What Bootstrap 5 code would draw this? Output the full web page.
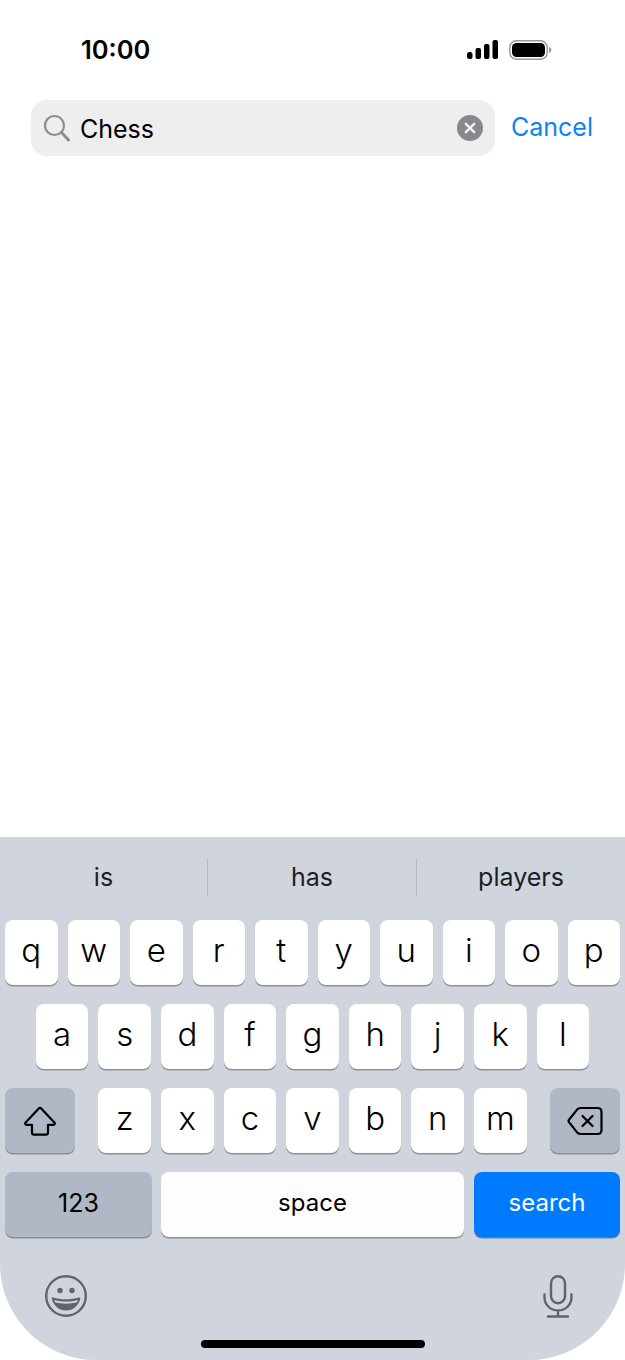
<!DOCTYPE html>
<html lang="en">
<head>
    <meta charset="UTF-8">
    <meta name="viewport" content="width=device-width, initial-scale=1.0">
    <title>Search</title>
    <link href="https://cdn.jsdelivr.net/npm/bootstrap@5.3.0/dist/css/bootstrap.min.css" rel="stylesheet">
    <style>
        html, body { height: 1360px; overflow: hidden; background: #fff; }
        body { font-family: Inter, "Liberation Sans", sans-serif; color: #000; }
        .phone { width: 625px; height: 1360px; }
        .status-bar { height: 100px; padding: 32px 73px 0 81px; align-items: flex-start; }
        .clock { font-size: 25.5px; font-weight: 600; line-height: 36px; }
        .status-icons { gap: 11px; padding-top: 7px; }
        .search-row { padding: 0 32px 0 31px; gap: 16px; }
        .search-box { width: 464px; height: 56px; background: #eeeeef; border-radius: 16px; padding: 0 12px 0 12px; flex-shrink: 0; }
        .search-text { font-size: 25px; margin-left: 10px; line-height: 1; padding-top: 2px; }
        .cancel-link { font-size: 25px; color: #0a84f5; text-decoration: none; }
        .keyboard { height: 523px; background: #d0d5dd; border-radius: 0 0 96px 96px; padding: 0 5px; }
        .suggest-row { height: 83px; margin: 0 -5px; padding-top: 21px; }
        .suggest-item { height: 38px; font-size: 25px; font-weight: 400; line-height: 38px; color: #1c1f24; text-align: center; }
        .suggest-item + .suggest-item { border-left: 1px solid #b7bcc5; }
        .first-slot { width: 207px; }
        .mid-slot { width: 209px; }
        .key-row { height: 65px; margin-bottom: 19px; gap: 10px; }
        .key-group { gap: 10px; }
        .kb-key { width: 52.6px; height: 65px; background: #fff; border-radius: 8px; box-shadow: 0 1.5px 0 #8b8f96; font-size: 33px; font-weight: 300; line-height: 60px; text-align: center; color: #000; }
        .kb-key.func { background: #b1b8c5; }
        .kb-key.wide { width: 70px; }
        .kb-key.txt { font-size: 24px; font-weight: 400; line-height: 62px; }
        .kb-key.blue { background: #007aff; color: #fff; box-shadow: 0 1.5px 0 #5d7fa8; }
        .kb-key.num-key { width: 147px; font-size: 25px; }
        .space-key { width: 303px; margin-left: -1px; background: #fdfdfd; }
        .search-key { width: 146px; }
        .bottom-icons { height: 64px; padding: 20px 47px 0 40px; margin-top: -1px; }
        .home-bar { width: 224px; height: 8px; background: #000; border-radius: 4px; margin: 21px auto 0; }
    </style>
</head>
<body>
    <div class="phone d-flex flex-column">
        <div class="status-bar d-flex justify-content-between">
            <span class="clock">10:00</span>
            <div class="status-icons d-flex align-items-start">
                <svg width="31" height="20" viewBox="0 0 31 20"><rect x="0" y="13" width="5.500" height="7" rx="2.500"/><rect x="8.500" y="9" width="5.500" height="11" rx="2"/><rect x="17" y="5" width="5.500" height="15" rx="2"/><rect x="25.500" y="1" width="5.500" height="19" rx="2"/></svg>
                <svg width="43" height="22" viewBox="0 0 43 22"><rect x="0.800" y="1.800" width="37.400" height="18.400" rx="6.500" fill="none" stroke="#9a9a9a" stroke-width="1.500"/><rect x="3" y="4" width="33" height="14" rx="4.500" fill="#000"/><path d="M40 8v6c1.500-.4 2.400-1.600 2.400-3s-.9-2.600-2.400-3z" fill="#9a9a9a"/></svg>
            </div>
        </div>
        <div class="search-row d-flex align-items-center">
            <div class="search-box d-flex align-items-center">
                <svg width="27" height="28" viewBox="0 0 27 28" fill="none" stroke="#8d8d92" stroke-width="2.200"><circle cx="11.500" cy="11.500" r="9.500"/><path d="M18.500 18.500l7 7.500" stroke-linecap="round" stroke-width="3"/></svg>
                <span class="search-text flex-grow-1">Chess</span>
                <svg width="26" height="26" viewBox="0 0 26 26"><circle cx="13" cy="13" r="13" fill="#87878c"/><path d="M8.800 8.800l8.400 8.400M17.200 8.800l-8.400 8.400" stroke="#f2f2f2" stroke-width="2.400" stroke-linecap="round"/></svg>
            </div>
            <a href="#" class="cancel-link">Cancel</a>
        </div>
        <div class="flex-grow-1"></div>
        <div class="keyboard">
            <div class="suggest-row d-flex">
                <div class="suggest-item first-slot">is</div>
                <div class="suggest-item mid-slot">has</div>
                <div class="suggest-item flex-grow-1">players</div>
            </div>
            <div class="key-row d-flex">
                <div class="kb-key">q</div><div class="kb-key">w</div><div class="kb-key">e</div><div class="kb-key">r</div><div class="kb-key">t</div><div class="kb-key">y</div><div class="kb-key">u</div><div class="kb-key">i</div><div class="kb-key">o</div><div class="kb-key">p</div>
            </div>
            <div class="key-row d-flex justify-content-center">
                <div class="kb-key">a</div><div class="kb-key">s</div><div class="kb-key">d</div><div class="kb-key">f</div><div class="kb-key">g</div><div class="kb-key">h</div><div class="kb-key">j</div><div class="kb-key">k</div><div class="kb-key">l</div>
            </div>
            <div class="key-row d-flex justify-content-between">
                <div class="kb-key func wide d-flex justify-content-center align-items-center">
                    <svg width="34" height="30" viewBox="0 0 34 30" fill="none" stroke="#000" stroke-width="2.200" stroke-linejoin="round"><path d="M15.800 2.400L2.600 16.500c-.9 1-.4 2.300 1 2.300H9v7.800c0 1.300.8 2.100 2 2.100h12c1.200 0 2-.8 2-2.100v-7.800h5.400c1.400 0 1.900-1.300 1-2.300L18.200 2.400c-.7-.7-1.700-.7-2.400 0z"/></svg>
                </div>
                <div class="key-group d-flex">
                    <div class="kb-key">z</div><div class="kb-key">x</div><div class="kb-key">c</div><div class="kb-key">v</div><div class="kb-key">b</div><div class="kb-key">n</div><div class="kb-key">m</div>
                </div>
                <div class="kb-key func wide d-flex justify-content-center align-items-center">
                    <svg width="36" height="30" viewBox="0 0 36 30" fill="none" stroke="#000" stroke-width="2.200" stroke-linejoin="round" stroke-linecap="round"><path d="M13.500 2H30.500c2.500 0 4 1.500 4 4v18c0 2.500-1.500 4-4 4H13.500c-1.300 0-2.300-.5-3.200-1.400L2.200 16.400c-.8-.9-.8-2 0-2.900L10.300 3.400C11.200 2.500 12.200 2 13.500 2z"/><path d="M15.500 10l10 10M25.500 10l-10 10"/></svg>
                </div>
            </div>
            <div class="key-row d-flex">
                <div class="kb-key func txt num-key">123</div>
                <div class="kb-key txt space-key">space</div>
                <div class="kb-key txt blue search-key">search</div>
            </div>
            <div class="bottom-icons d-flex justify-content-between align-items-start">
                <svg width="42" height="42" viewBox="0 0 42 42"><circle cx="21" cy="21" r="19.800" fill="none" stroke="#5f646c" stroke-width="2.400"/><circle cx="15" cy="15.500" r="2.700" fill="#5f646c"/><circle cx="27" cy="15.500" r="2.700" fill="#5f646c"/><path d="M8 22.500c4 1.200 8.300 1.800 13 1.800s9-.6 13-1.800c.9-.3 1.500.3 1.300 1.200C33.500 30.800 28 35.500 21 35.500S8.500 30.800 6.700 23.700c-.2-.9.400-1.500 1.300-1.200z" fill="#5f646c"/><path d="M9.200 25c3.800 1 7.600 1.500 11.800 1.500s8-.5 11.800-1.500c-.3.900-.7 1.800-1.200 2.600-3.300.7-6.900 1.100-10.600 1.100s-7.300-.4-10.600-1.100c-.5-.8-.9-1.700-1.200-2.600z" fill="#d0d5dd"/></svg>
                <svg width="30" height="43" viewBox="0 0 30 43" fill="none" stroke="#5f646c" stroke-width="2.400" stroke-linecap="round"><rect x="8" y="1.200" width="14" height="27" rx="7"/><path d="M1.500 19.500v2.500c0 8 6 13.500 13.500 13.500S28.500 30 28.500 22v-2.500M15 35.500v6M5 41.500h20"/></svg>
            </div>
            <div class="home-bar"></div>
        </div>
    </div>
</body>
</html>
